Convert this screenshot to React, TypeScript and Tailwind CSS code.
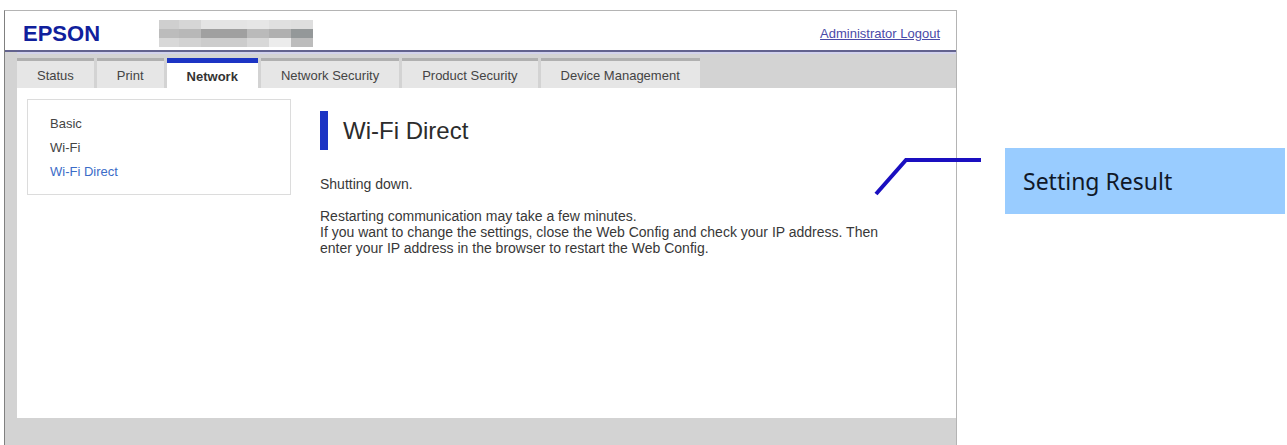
const tabs = [
  { name: 'Status' },
  { name: 'Print' },
  { name: 'Network', active: true },
  { name: 'Network Security' },
  { name: 'Product Security' },
  { name: 'Device Management' },
]

const menu = [
  { name: 'Basic' },
  { name: 'Wi-Fi' },
  { name: 'Wi-Fi Direct', active: true },
]

// Pixelated model name, one row per strip: [x, width, color]
const mosaic = [
  [[0, 20, '#cfcfcf'], [20, 22, '#d6d6d6'], [42, 46, '#e4e4e4'], [88, 22, '#e6e6e6'], [110, 22, '#e0e0e0'], [132, 22, '#dedede']],
  [[0, 20, '#bcbcbc'], [20, 22, '#b8b8b8'], [42, 46, '#a0a0a0'], [88, 22, '#bababa'], [110, 22, '#b0b0b0'], [132, 22, '#949899']],
  [[0, 20, '#d8d8d8'], [20, 22, '#d2d2d2'], [42, 46, '#cccccc'], [88, 22, '#d8d8d8'], [110, 22, '#ececec'], [132, 22, '#bcbcbc']],
] as [number, number, string][][]

function ModelName() {
  return (
    <svg width="154" height="27" viewBox="0 0 154 27" aria-hidden="true">
      {mosaic.map((row, y) =>
        row.map(([x, width, color]) => (
          <rect key={`${x}-${y}`} x={x} y={y * 9} width={width} height="9" fill={color} />
        ))
      )}
    </svg>
  )
}

function Header() {
  return (
    <header className="flex h-[41px] items-center border-b-2 border-[#62628e] pt-1.5 pr-4 pl-[18px]">
      <span className="w-[136px] text-[22px] font-bold leading-6 text-[#10209c]">EPSON</span>
      <ModelName />
      <a href="#logout" className="ml-auto text-[13px] leading-4 text-[#4a4aa8] underline">
        Administrator Logout
      </a>
    </header>
  )
}

function Tabs() {
  return (
    <nav className="flex gap-[3px] border-t-2 border-[#d2d2ec] pt-1">
      {tabs.map((tab) => (
        <button
          key={tab.name}
          type="button"
          className={
            tab.active
              ? 'h-[30px] border-t-5 border-[#1c34c4] bg-white px-5 pt-0.5 text-[13px] font-bold text-[#333]'
              : 'h-[30px] border-t-3 border-[#b0b0b0] bg-[#e6e6e6] px-5 pt-0.5 text-[13px] text-[#444]'
          }
        >
          {tab.name}
        </button>
      ))}
    </nav>
  )
}

function Sidebar() {
  return (
    <ul className="h-24 w-[264px] border border-[#dcdcdc] py-3 pl-[22px] text-[13px] leading-6">
      {menu.map((item) => (
        <li key={item.name}>
          <a href="#menu" className={item.active ? 'text-[#3c6cc8]' : 'text-[#444]'}>
            {item.name}
          </a>
        </li>
      ))}
    </ul>
  )
}

function Callout() {
  return (
    <aside className="relative mt-[148px] mr-0.5 ml-12 flex h-[66px] w-[280px] items-center self-start bg-[#99ccff] px-[18px] font-['Noto_Sans',sans-serif] text-[23px] text-[#101828]">
      <svg
        className="absolute top-2 right-full mr-6"
        width="108"
        height="42"
        viewBox="0 0 108 42"
        fill="none"
        stroke="#1a0fc0"
        strokeWidth="4"
        aria-hidden="true"
      >
        <path d="M3 38 L33 4 H108" />
      </svg>
      Setting Result
    </aside>
  )
}

export default function App() {
  return (
    <div className="flex bg-white font-['Liberation_Sans',Arial,sans-serif]">
      <div className="mt-2.5 ml-1 flex-1 border border-b-0 border-[#b4b4b4] border-l-[#808080]">
        <Header />
        <div className="bg-[#d3d3d3] pb-7 pl-3">
          <Tabs />
          <main className="flex min-h-[330px] gap-[29px] bg-white pt-[11px] pl-2.5">
            <Sidebar />
            <section className="flex-1 pt-3 pr-12 text-[14px] leading-4 text-[#383838]">
              <h1 className="border-l-8 border-[#1c34c4] pl-[15px] text-[24px] leading-[39px] text-[#2c2c2c]">
                Wi-Fi Direct
              </h1>
              <p className="mt-[26px]">Shutting down.</p>
              <p className="mt-4">
                Restarting communication may take a few minutes.
                <br />
                If you want to change the settings, close the Web Config and check your IP address. Then enter your IP
                address in the browser to restart the Web Config.
              </p>
            </section>
          </main>
        </div>
      </div>
      <Callout />
    </div>
  )
}
